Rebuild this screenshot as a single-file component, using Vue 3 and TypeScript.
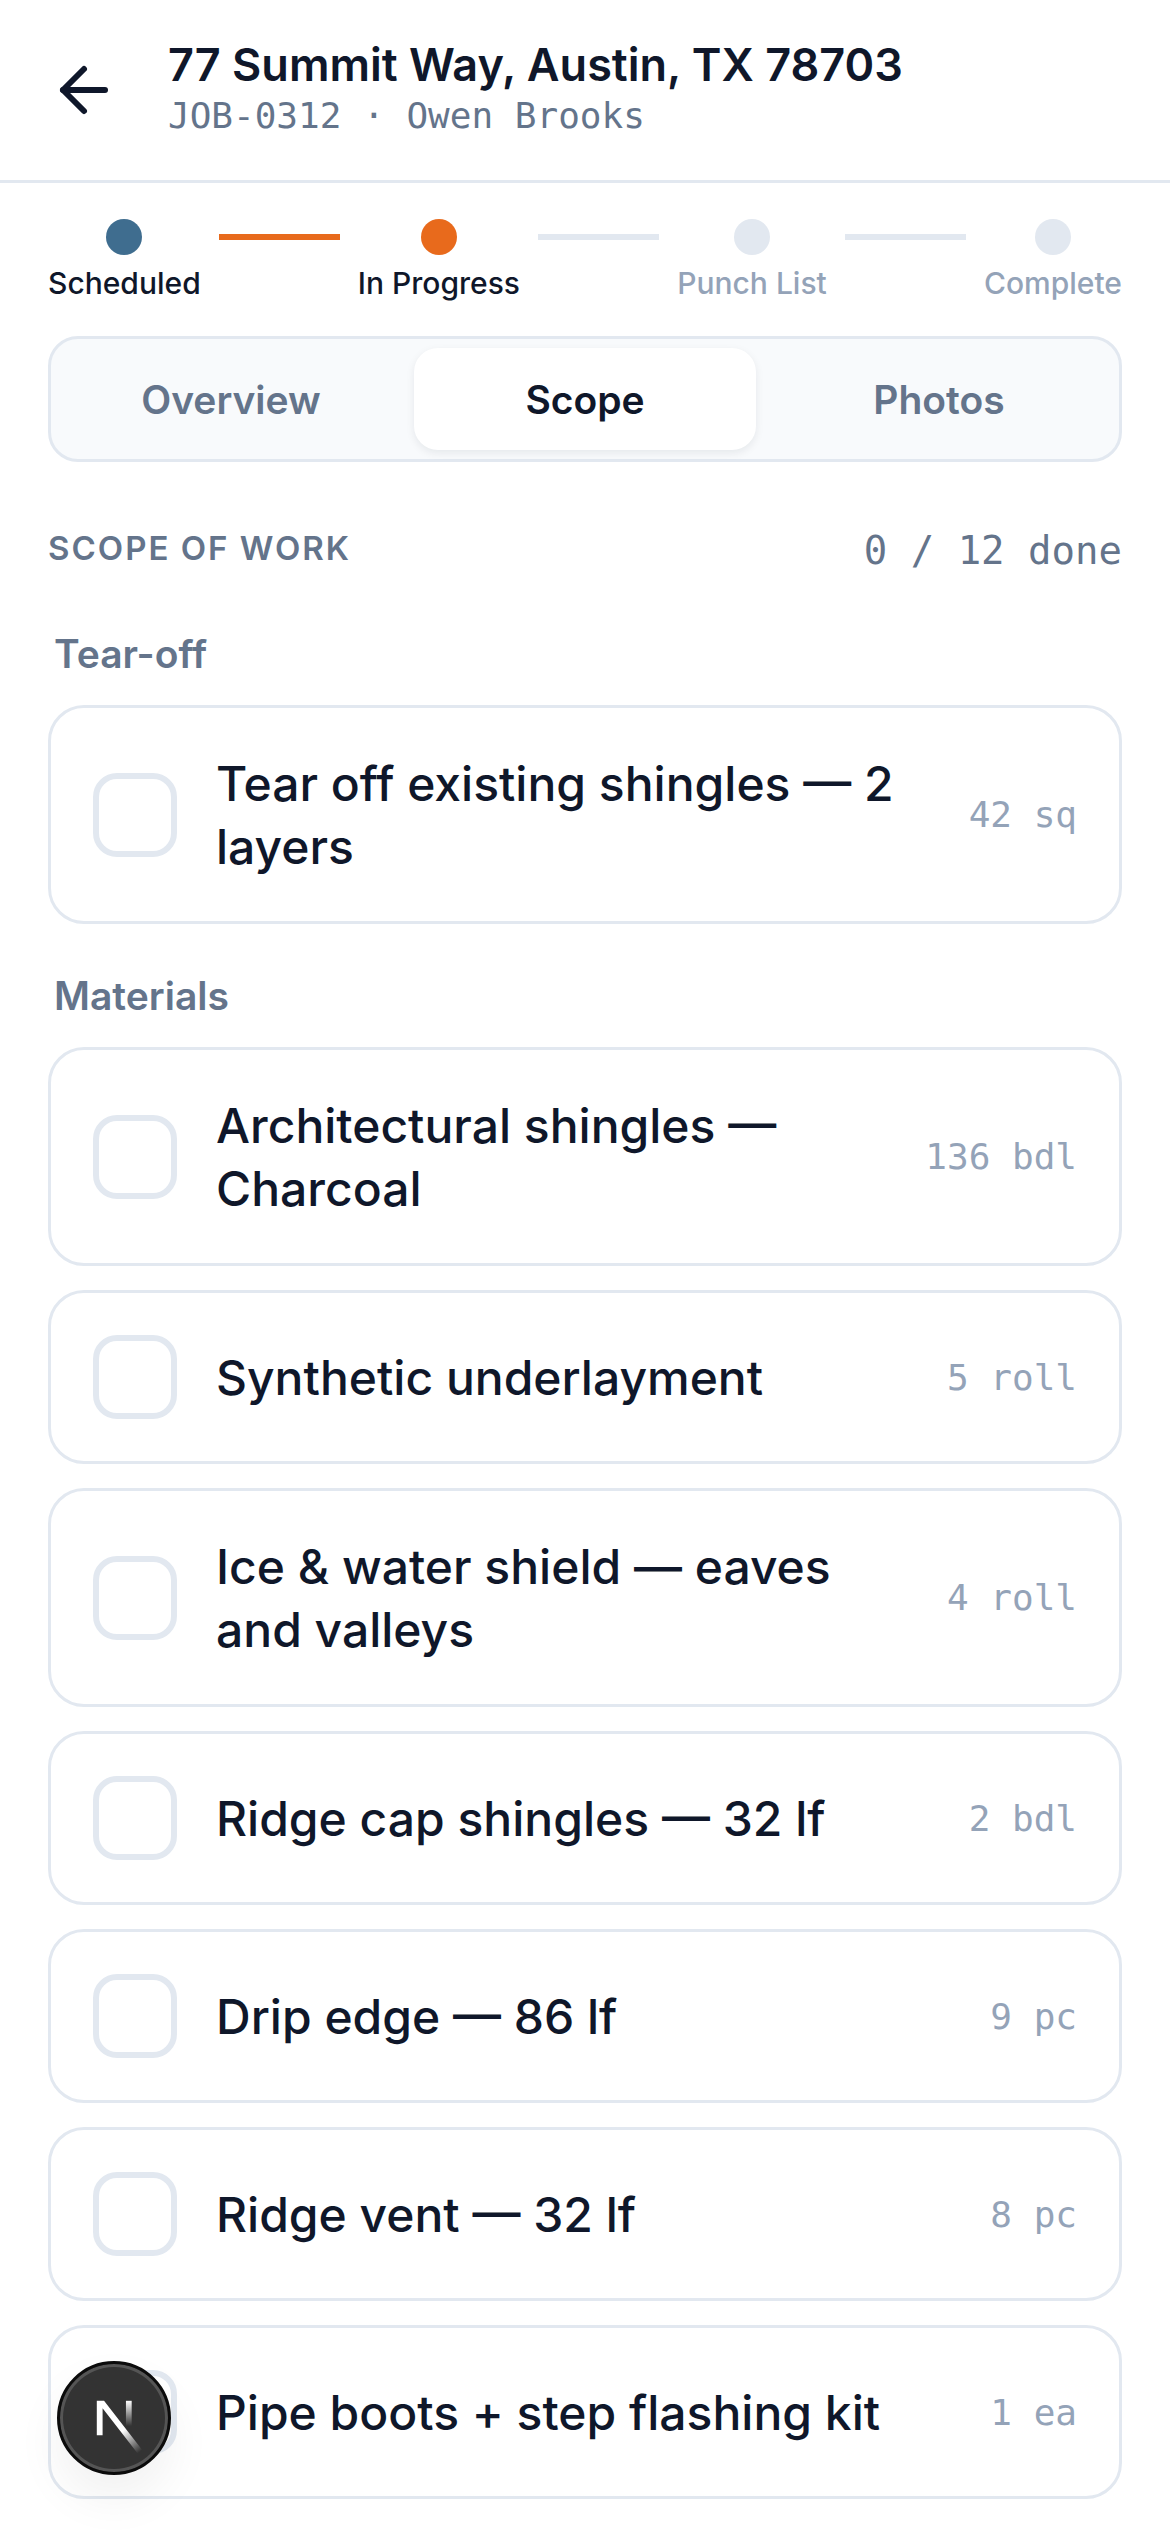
<template>
  <div class="page">
    <header class="topbar">
      <button class="back" aria-label="Back">
        <svg viewBox="0 0 24 24" width="72" height="72" fill="none" stroke="#0f172a" stroke-width="2" stroke-linecap="round" stroke-linejoin="round">
          <path d="M19 12H5" />
          <path d="M12 19l-7-7 7-7" />
        </svg>
      </button>
      <div class="topbar-text">
        <div class="address">77 Summit Way, Austin, TX 78703</div>
        <div class="job">JOB-0312 · Owen Brooks</div>
      </div>
    </header>

    <div class="stepper">
      <template v-for="(step, i) in steps" :key="step.label">
        <div class="step">
          <span class="dot" :class="step.state" />
          <span class="step-label" :class="step.state">{{ step.label }}</span>
        </div>
        <span v-if="i < steps.length - 1" class="line" :class="{ on: i === 0 }" />
      </template>
    </div>

    <div class="tabs">
      <div v-for="tab in tabs" :key="tab" class="tab" :class="{ active: tab === 'Scope' }">{{ tab }}</div>
    </div>

    <div class="section-head">
      <span class="section-title">SCOPE OF WORK</span>
      <span class="section-count">0 / 12 done</span>
    </div>

    <section v-for="group in groups" :key="group.name" class="group">
      <h3 class="group-name">{{ group.name }}</h3>
      <div class="items">
        <div v-for="item in group.items" :key="item.text" class="item">
          <span class="check" />
          <span class="item-text">{{ item.text }}</span>
          <span class="qty">{{ item.qty }}</span>
        </div>
      </div>
    </section>

    <div class="next-badge">
      <svg viewBox="0 0 180 180" width="86" height="86" fill="none">
        <defs>
          <linearGradient id="nextA" x1="109" y1="116.5" x2="144.5" y2="160.5" gradientUnits="userSpaceOnUse">
            <stop stop-color="#fff" />
            <stop offset="1" stop-color="#fff" stop-opacity="0" />
          </linearGradient>
          <linearGradient id="nextB" x1="121" y1="54" x2="120.8" y2="106.9" gradientUnits="userSpaceOnUse">
            <stop stop-color="#fff" />
            <stop offset="1" stop-color="#fff" stop-opacity="0" />
          </linearGradient>
        </defs>
        <path d="M149.508 157.52L69.142 54H54v71.97h12.114V69.384l73.885 95.461a90.304 90.304 0 009.509-7.325z" fill="url(#nextA)" />
        <rect x="115" y="54" width="12" height="72" fill="url(#nextB)" />
      </svg>
    </div>
  </div>
</template>

<script setup lang="ts">
interface Step {
  label: string;
  state: 'done' | 'current' | 'todo';
}

interface Item {
  text: string;
  qty: string;
}

const steps: Step[] = [
  { label: 'Scheduled', state: 'done' },
  { label: 'In Progress', state: 'current' },
  { label: 'Punch List', state: 'todo' },
  { label: 'Complete', state: 'todo' },
];

const tabs = ['Overview', 'Scope', 'Photos'];

const groups: { name: string; items: Item[] }[] = [
  {
    name: 'Tear-off',
    items: [{ text: 'Tear off existing shingles — 2 layers', qty: '42 sq' }],
  },
  {
    name: 'Materials',
    items: [
      { text: 'Architectural shingles — Charcoal', qty: '136 bdl' },
      { text: 'Synthetic underlayment', qty: '5 roll' },
      { text: 'Ice & water shield — eaves and valleys', qty: '4 roll' },
      { text: 'Ridge cap shingles — 32 lf', qty: '2 bdl' },
      { text: 'Drip edge — 86 lf', qty: '9 pc' },
      { text: 'Ridge vent — 32 lf', qty: '8 pc' },
      { text: 'Pipe boots + step flashing kit', qty: '1 ea' },
    ],
  },
];
</script>

<style>
html,
body {
  margin: 0;
  background: #fff;
}
</style>

<style scoped>
.page {
  position: relative;
  height: 2532px;
  overflow: hidden;
  background: #fff;
  font-family: Inter, "Liberation Sans", sans-serif;
  color: #0f172a;
}
.topbar {
  display: flex;
  align-items: center;
  gap: 48px;
  height: 183px;
  box-sizing: border-box;
  padding: 0 48px;
  border-bottom: 3px solid #e2e8f0;
}
.back {
  display: flex;
  padding: 0;
  border: none;
  background: none;
}
.topbar-text {
  padding-bottom: 6px;
}
.address {
  font-size: 45px;
  font-weight: 600;
  line-height: 57px;
}
.job {
  font-family: "DejaVu Sans Mono", monospace;
  font-size: 36px;
  line-height: 45px;
  color: #64748b;
}
.stepper {
  display: flex;
  padding: 36px 48px 0;
}
.step {
  display: flex;
  flex-direction: column;
  align-items: center;
  gap: 7px;
}
.dot {
  width: 36px;
  height: 36px;
  border-radius: 50%;
  background: #e2e8f0;
}
.dot.done {
  background: #3f6d8f;
}
.dot.current {
  background: #e86a1c;
}
.step-label {
  font-size: 30px;
  font-weight: 500;
  line-height: 42px;
  color: #94a3b8;
}
.step-label.done,
.step-label.current {
  color: #0f172a;
}
.line {
  flex: 1;
  height: 6px;
  margin: 15px 18px 0;
  background: #e2e8f0;
}
.line.on {
  background: #e86a1c;
}
.tabs {
  display: flex;
  gap: 12px;
  margin: 32px 48px 0;
  padding: 9px;
  border: 3px solid #e2e8f0;
  border-radius: 30px;
  background: #f8fafc;
}
.tab {
  flex: 1;
  height: 102px;
  display: flex;
  align-items: center;
  justify-content: center;
  border-radius: 24px;
  font-size: 39px;
  font-weight: 600;
  color: #64748b;
}
.tab.active {
  background: #fff;
  color: #0f172a;
  box-shadow: 0 3px 9px rgba(15, 23, 42, 0.08);
}
.section-head {
  display: flex;
  align-items: flex-start;
  justify-content: space-between;
  margin: 66px 48px 57px;
}
.section-title {
  font-size: 33px;
  font-weight: 600;
  letter-spacing: 2px;
  color: #64748b;
}
.section-count {
  font-family: "DejaVu Sans Mono", monospace;
  font-size: 39px;
  color: #64748b;
}
.group {
  margin: 0 48px;
}
.group-name {
  margin: 48px 6px 27px;
  font-size: 39px;
  font-weight: 600;
  line-height: 48px;
  color: #64748b;
}
.items {
  display: flex;
  flex-direction: column;
  gap: 24px;
}
.item {
  display: flex;
  align-items: center;
  gap: 39px;
  padding: 42px;
  border: 3px solid #e2e8f0;
  border-radius: 36px;
  background: #fff;
}
.check {
  flex: none;
  box-sizing: border-box;
  width: 84px;
  height: 84px;
  border: 6px solid #e2e8f0;
  border-radius: 24px;
}
.item-text {
  flex: 1;
  padding: 1.5px 0;
  font-size: 48px;
  font-weight: 500;
  line-height: 63px;
}
.qty {
  font-family: "DejaVu Sans Mono", monospace;
  font-size: 36px;
  color: #94a3b8;
}
.next-badge {
  position: absolute;
  left: 57px;
  top: 2361px;
  width: 114px;
  height: 114px;
  box-sizing: border-box;
  display: flex;
  align-items: center;
  justify-content: center;
  border-radius: 50%;
  background: #333;
  border: 3px solid #0b0b0b;
  box-shadow: inset 0 0 0 3px #555, 0 24px 48px rgba(0, 0, 0, 0.06);
}
</style>
